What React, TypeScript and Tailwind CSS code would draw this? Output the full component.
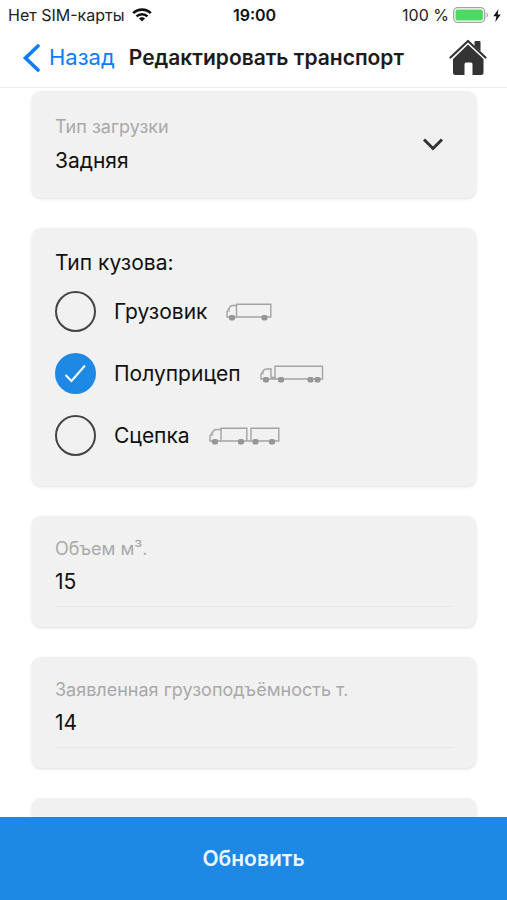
import { useState } from "react";
import type { ReactNode } from "react";

function WifiIcon() {
  return (
    <svg width="20" height="14" viewBox="0 0 20 14" fill="none" stroke="#111" strokeWidth="2.6" aria-hidden="true">
      <path d="M1.2 5.2C6 0.4 14 0.4 18.800 5.2" />
      <path d="M4.500 8.400C7.500 5.500 12.500 5.500 15.500 8.400" />
      <path d="M10 13.400L6.900 10.300C8.700 8.800 11.300 8.800 13.100 10.300Z" fill="#111" stroke="none" />
    </svg>
  );
}

function BatteryIcon() {
  return (
    <svg width="36" height="16" viewBox="0 0 36 16" fill="none" aria-hidden="true">
      <rect x="0.700" y="0.700" width="31" height="14.600" rx="4" stroke="#a3a3a3" strokeWidth="1.300" />
      <rect x="2.500" y="2.500" width="27.400" height="11" rx="2" fill="#4cd964" />
      <path d="M33.500 5.500C35.300 6.300 35.300 9.700 33.500 10.500Z" fill="#a3a3a3" />
    </svg>
  );
}

function BoltIcon() {
  return (
    <svg width="8" height="13" viewBox="0 0 8 13" fill="#111" aria-hidden="true">
      <path d="M5.500 0L0.300 7.200H3.400L2.300 13L7.700 5.400H4.600Z" />
    </svg>
  );
}

function HomeIcon() {
  return (
    <svg width="38" height="37" viewBox="0 0 38 37" fill="#333" aria-hidden="true">
      <path d="M25.500 3Q25.500 2 26.500 2H30.500Q31.500 2 31.500 3V12.500L25.500 7Z" />
      <path d="M1.500 18.500L19 2L36.500 18.500" fill="none" stroke="#333" strokeWidth="2.200" strokeLinecap="round" strokeLinejoin="round" />
      <path d="M19 5.600L34.500 20V33.500Q34.500 36 32 36H23.500V25.500Q23.500 23.500 22 23.500H17Q15.500 23.500 15.500 25.500V36H6.500Q4 36 4 33.500V20Z" />
    </svg>
  );
}

function Wheels({ at }: { at: number[] }) {
  return (
    <g fill="#969696" stroke="none">
      {at.map((x) => (
        <rect key={x} x={x - 3} y="12" width="6" height="5.600" rx="1.800" />
      ))}
    </g>
  );
}

function TruckIcon() {
  return (
    <svg width="46" height="18" viewBox="0 0 46 18" fill="none" stroke="#a3a3a3" strokeWidth="1.400" aria-hidden="true">
      <path d="M10.500 1.200H44.800V14H10.500Z" />
      <path d="M10.500 2.500H6.500Q4.500 2.500 3.500 4.500L1 9V14H10.500" />
      <path d="M3.500 4.500V8.500H1.500" strokeWidth="0.600" />
      <Wheels at={[6, 38.5]} />
    </svg>
  );
}

function SemiTrailerIcon() {
  return (
    <svg width="64" height="18" viewBox="0 0 64 18" fill="none" stroke="#a3a3a3" strokeWidth="1.400" aria-hidden="true">
      <path d="M15 1.200H62.500V14H15Z" />
      <path d="M11 12.500V4H6.500Q4.500 4 3.500 5.500L1 9.500V14H15M11 12.500H15" />
      <path d="M3.500 5.500V9H1.500" strokeWidth="0.600" />
      <Wheels at={[6, 21, 50.5, 57.5]} />
    </svg>
  );
}

function RoadTrainIcon() {
  return (
    <svg width="71" height="18" viewBox="0 0 71 18" fill="none" stroke="#a3a3a3" strokeWidth="1.400" aria-hidden="true">
      <path d="M12 1.200H37.800V14H12ZM42 1.200H69.800V14H42ZM37.800 14H42" />
      <path d="M12 2.500H7Q5 2.500 4 4.500L1 9V14H12" />
      <path d="M4 4.500V8.500H1.500" strokeWidth="0.600" />
      <Wheels at={[6, 32, 46.5, 63]} />
    </svg>
  );
}

const bodyTypes: { id: string; label: string; icon: ReactNode }[] = [
  { id: "truck", label: "Грузовик", icon: <TruckIcon /> },
  { id: "semi", label: "Полуприцеп", icon: <SemiTrailerIcon /> },
  { id: "train", label: "Сцепка", icon: <RoadTrainIcon /> },
];

const cardClass = "shrink-0 rounded-[9px] bg-[#f1f1f1] px-[23px] shadow-[0_1px_3px_rgba(0,0,0,0.14)]";

function NumberField({ id, label, initial }: { id: string; label: string; initial: string }) {
  const [value, setValue] = useState(initial);
  return (
    <div className={`${cardClass} pt-[21px] pb-5`}>
      <label htmlFor={id} className="block text-lg leading-6 text-[#a9a9a9]">
        {label}
      </label>
      <input
        id={id}
        inputMode="numeric"
        value={value}
        onChange={(e) => setValue(e.target.value)}
        className="block h-[46px] w-full border-b border-[#e7e7e7] bg-transparent pb-1 text-[21px] text-[#111] outline-none"
      />
    </div>
  );
}

export default function App() {
  const [bodyType, setBodyType] = useState("semi");
  return (
    <div className="flex h-screen flex-col overflow-hidden bg-white font-['Inter','Noto_Sans',sans-serif] text-[#111]">
      <div className="grid h-[30px] shrink-0 grid-cols-[1fr_auto_1fr] items-center pr-1.5 pl-2 text-base text-[#222]">
        <div className="flex items-center gap-2 whitespace-nowrap">
          <span>Нет SIM-карты</span>
          <WifiIcon />
        </div>
        <span className="font-semibold text-[#111]">19:00</span>
        <div className="flex items-center justify-end gap-1 whitespace-nowrap">
          <span>100 %</span>
          <BatteryIcon />
          <BoltIcon />
        </div>
      </div>

      <header className="flex h-[58px] shrink-0 items-center border-b border-[#ececec] pr-5 pb-0.5 pl-[22px]">
        <button type="button" className="flex items-center gap-2 text-[22px] text-[#0a7cff]">
          <svg width="19" height="28" viewBox="0 0 19 28" fill="none" stroke="currentColor" strokeWidth="3.600" aria-hidden="true">
            <path d="M16 2L3.500 14L16 26" strokeLinecap="round" />
          </svg>
          Назад
        </button>
        <h1 className="ml-3.5 flex-1 text-[21px] font-semibold whitespace-nowrap text-[#1c1c1c]">Редактировать транспорт</h1>
        <button type="button" aria-label="Домой">
          <HomeIcon />
        </button>
      </header>

      <main className="flex min-h-0 flex-1 flex-col gap-[30px] overflow-hidden pt-[3px] pr-[31px] pl-8">
        <div className={`${cardClass} relative pt-6 pb-5`}>
          <label htmlFor="loading" className="block text-lg leading-6 text-[#a9a9a9]">
            Тип загрузки
          </label>
          <select id="loading" defaultValue="rear" className="block h-[39px] w-full appearance-none bg-transparent pt-1 text-[21px] outline-none">
            <option value="rear">Задняя</option>
            <option value="side">Боковая</option>
            <option value="top">Верхняя</option>
          </select>
          <svg className="pointer-events-none absolute top-1/2 right-8 -translate-y-1/2" width="22" height="15" viewBox="0 0 22 15" fill="none" stroke="#333" strokeWidth="3" aria-hidden="true">
            <path d="M2 2L11 11L20 2" />
          </svg>
        </div>

        <fieldset className={`${cardClass} pt-[21px] pb-[30px]`}>
          <legend className="float-left w-full text-[21px] leading-7">Тип кузова:</legend>
          <div className="clear-both flex flex-col gap-[21px] pt-[14px]">
            {bodyTypes.map(({ id, label, icon }) => (
              <label key={id} className="flex h-[41px] items-center text-[21px]">
                <span className="relative mr-[18px] grid size-[41px] place-items-center">
                  <input
                    type="radio"
                    name="bodyType"
                    value={id}
                    checked={bodyType === id}
                    onChange={() => setBodyType(id)}
                    className="size-[41px] appearance-none rounded-full border-2 border-[#444] checked:border-[#1e88e5] checked:bg-[#1e88e5]"
                  />
                  {bodyType === id && (
                    <svg className="pointer-events-none absolute" width="23" height="19" viewBox="0 0 23 19" fill="none" stroke="#fff" strokeWidth="2" aria-hidden="true">
                      <path d="M1.500 11L7.500 17L21 1.500" />
                    </svg>
                  )}
                </span>
                <span className="mr-[19px]">{label}</span>
                {icon}
              </label>
            ))}
          </div>
        </fieldset>

        <NumberField id="volume" label="Объем м³." initial="15" />
        <NumberField id="capacity" label="Заявленная грузоподъёмность т." initial="14" />
        <div className={`${cardClass} h-[111px]`} />
      </main>

      <button type="button" className="h-[83px] shrink-0 bg-[#1e88e5] text-[21px] font-semibold text-[#eaf6ff]">
        Обновить
      </button>
    </div>
  );
}
